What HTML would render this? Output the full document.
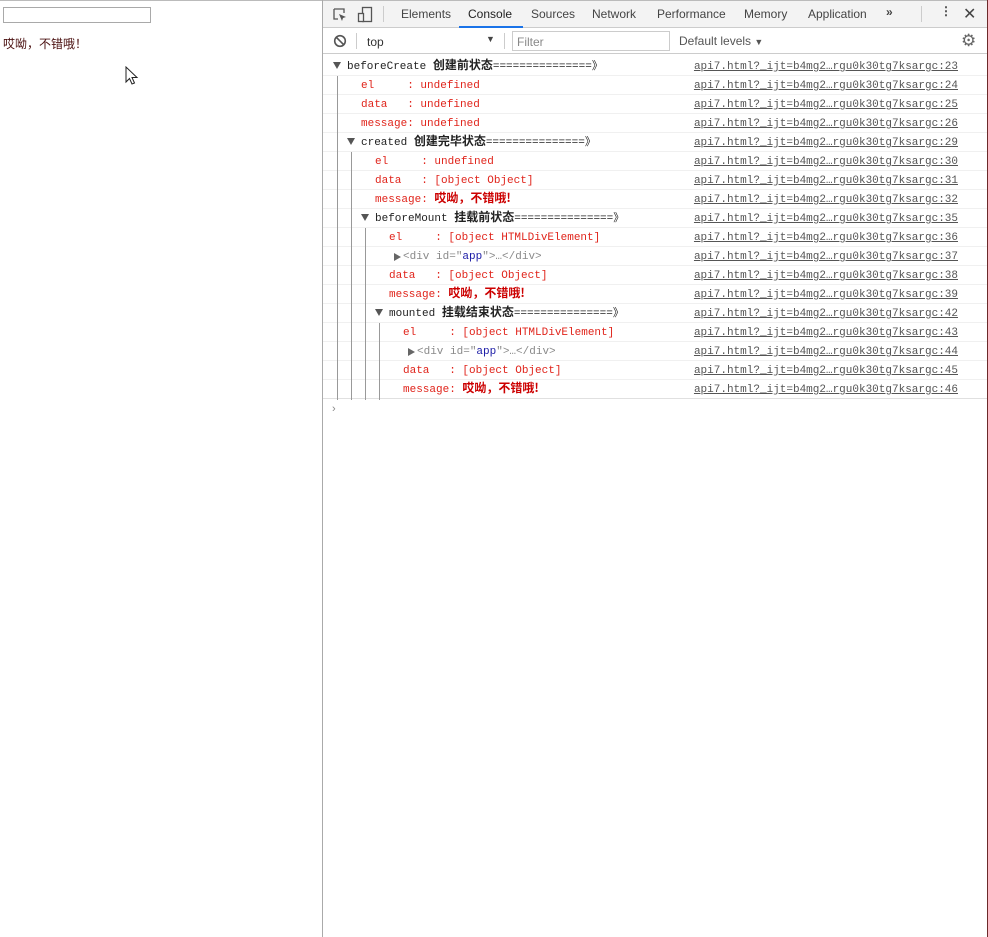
<!DOCTYPE html>
<html><head><meta charset="utf-8"><style>
*{margin:0;padding:0;box-sizing:border-box}
body{width:988px;height:937px;position:relative;background:#fff;overflow:hidden;font-family:"Liberation Sans","Noto Sans CJK SC",sans-serif}
.a{position:absolute}
.mono{font-family:"Liberation Mono","Noto Sans CJK SC",monospace;font-size:11px;white-space:pre}
.row{position:absolute;left:323px;right:1px;height:19px;border-bottom:1px solid #f0f0f0}
.t{position:absolute;top:4px;height:13px;line-height:13px;white-space:pre;display:flex;align-items:center}
.t span,.t b{display:block;line-height:13px;height:13px;white-space:pre}
.lnk{position:absolute;top:4px;line-height:13px;right:29px;color:#555;text-decoration:underline;white-space:pre}
.red{color:#e0241b}
.t .cn{color:#c00;font-weight:bold;font-family:"Noto Sans CJK SC",sans-serif;font-size:12px;line-height:13px;height:13px;position:relative;top:-3px}
.hd{color:#222}
.hd b{font-family:"Noto Sans CJK SC",sans-serif;font-size:12px;position:relative;top:-3px}
.tri{position:absolute;top:5px;width:0;height:0;border-left:4px solid transparent;border-right:4px solid transparent;border-top:7px solid #555}
.tr2{position:absolute;top:6px;width:0;height:0;border-top:4px solid transparent;border-bottom:4px solid transparent;border-left:7px solid #666}
.vl{position:absolute;width:1px;background:#999}
.tab{position:absolute;top:7px;font-size:12px;color:#444}
.tag{color:#8a8a8a}.val{color:#1a1aa6}.nm{color:#8a8a8a}
</style></head><body>
<div class="a" style="left:0;top:0;width:988px;height:1px;background:#bbb"></div>
<div class="a" style="left:3px;top:7px;width:148px;height:16px;border:1px solid #a9a9a9"></div>
<div class="a" style="left:3px;top:35px;font-size:12px;color:#4a1010;font-family:'Noto Sans CJK SC',sans-serif">哎呦，不错哦！</div>
<svg class="a" style="left:125px;top:66px" width="14" height="20" viewBox="0 0 14 20"><path d="M1 1 L1 16 L4.5 12.5 L7 18 L9.5 17 L7 11.5 L12 11.5 Z" fill="#fff" stroke="#222" stroke-width="1"/></svg>
<div class="a" style="left:322px;top:0;width:1px;height:937px;background:#aaa"></div>
<div class="a" style="left:987px;top:0;width:1px;height:937px;background:#6b2a2a"></div>
<div class="a" style="left:323px;top:1px;width:664px;height:27px;background:#f3f3f3;border-bottom:1px solid #ccc"></div>
<svg class="a" style="left:332px;top:7px" width="16" height="16" viewBox="0 0 16 16"><path d="M2 2h10v4M2 2v10h4" fill="none" stroke="#555" stroke-width="1.3"/><path d="M7 7l7 3-3 1-1 3z" fill="#555"/></svg>
<svg class="a" style="left:357px;top:6px" width="16" height="17" viewBox="0 0 16 17"><rect x="5.5" y="1.5" width="9" height="14" fill="none" stroke="#555" stroke-width="1.3"/><rect x="1.5" y="7.5" width="5" height="8" fill="#f3f3f3" stroke="#555" stroke-width="1.3"/></svg>
<div class="a" style="left:383px;top:6px;width:1px;height:16px;background:#ccc"></div>
<div class="tab" style="left:401px">Elements</div>
<div class="tab" style="left:468px;color:#222">Console</div>
<div class="a" style="left:459px;top:26px;width:64px;height:2px;background:#1a73e8"></div>
<div class="tab" style="left:531px">Sources</div>
<div class="tab" style="left:592px">Network</div>
<div class="tab" style="left:657px">Performance</div>
<div class="tab" style="left:744px">Memory</div>
<div class="tab" style="left:808px">Application</div>
<div class="tab" style="left:886px;font-weight:bold;top:5px">»</div>
<div class="a" style="left:921px;top:6px;width:1px;height:16px;background:#ccc"></div>
<div class="tab" style="left:940px;font-weight:bold;top:4px">⋮</div>
<div class="tab" style="left:963px;font-size:16px;top:4px">✕</div>
<div class="a" style="left:323px;top:29px;width:664px;height:25px;background:#fff;border-bottom:1px solid #ccc"></div>
<svg class="a" style="left:333px;top:34px" width="14" height="14" viewBox="0 0 14 14"><circle cx="7" cy="7" r="5.3" fill="none" stroke="#555" stroke-width="1.6"/><path d="M3.2 3.2l7.6 7.6" stroke="#555" stroke-width="1.6"/></svg>
<div class="a" style="left:356px;top:33px;width:1px;height:16px;background:#ccc"></div>
<div class="a" style="left:367px;top:35px;font-size:12px;color:#333">top</div>
<div class="a" style="left:486px;top:34px;font-size:9px;color:#444">▼</div>
<div class="a" style="left:504px;top:33px;width:1px;height:16px;background:#ccc"></div>
<div class="a" style="left:512px;top:31px;width:158px;height:20px;border:1px solid #ccc"></div>
<div class="a" style="left:517px;top:35px;font-size:12px;color:#888">Filter</div>
<div class="a" style="left:679px;top:34px;font-size:12px;color:#555">Default levels <span style="font-size:9px">▼</span></div>
<div class="a" style="left:961px;top:31px;font-size:17px;color:#666">⚙</div>
<div class="mono">
<div class="row" style="top:57px"><div class="tri" style="left:10px"></div><div class="t hd" style="left:24px"><span>beforeCreate </span><b>创建前状态</b><span>===============》</span></div><span class="lnk">api7.html?_ijt=b4mg2…rgu0k30tg7ksargc:23</span></div>
<div class="row" style="top:76px"><div class="t red" style="left:38px"><span>el     : undefined</span></div><span class="lnk">api7.html?_ijt=b4mg2…rgu0k30tg7ksargc:24</span></div>
<div class="row" style="top:95px"><div class="t red" style="left:38px"><span>data   : undefined</span></div><span class="lnk">api7.html?_ijt=b4mg2…rgu0k30tg7ksargc:25</span></div>
<div class="row" style="top:114px"><div class="t red" style="left:38px"><span>message: undefined</span></div><span class="lnk">api7.html?_ijt=b4mg2…rgu0k30tg7ksargc:26</span></div>
<div class="row" style="top:133px"><div class="tri" style="left:24px"></div><div class="t hd" style="left:38px"><span>created </span><b>创建完毕状态</b><span>===============》</span></div><span class="lnk">api7.html?_ijt=b4mg2…rgu0k30tg7ksargc:29</span></div>
<div class="row" style="top:152px"><div class="t red" style="left:52px"><span>el     : undefined</span></div><span class="lnk">api7.html?_ijt=b4mg2…rgu0k30tg7ksargc:30</span></div>
<div class="row" style="top:171px"><div class="t red" style="left:52px"><span>data   : [object Object]</span></div><span class="lnk">api7.html?_ijt=b4mg2…rgu0k30tg7ksargc:31</span></div>
<div class="row" style="top:190px"><div class="t red" style="left:52px"><span>message: </span><span class="cn">哎呦，不错哦!</span></div><span class="lnk">api7.html?_ijt=b4mg2…rgu0k30tg7ksargc:32</span></div>
<div class="row" style="top:209px"><div class="tri" style="left:38px"></div><div class="t hd" style="left:52px"><span>beforeMount </span><b>挂载前状态</b><span>===============》</span></div><span class="lnk">api7.html?_ijt=b4mg2…rgu0k30tg7ksargc:35</span></div>
<div class="row" style="top:228px"><div class="t red" style="left:66px"><span>el     : [object HTMLDivElement]</span></div><span class="lnk">api7.html?_ijt=b4mg2…rgu0k30tg7ksargc:36</span></div>
<div class="row" style="top:247px"><div class="tr2" style="left:71px"></div><div class="t" style="left:80px"><span class="tag">&lt;div </span><span class="nm">id</span><span class="tag">="</span><span class="val">app</span><span class="tag">"&gt;…&lt;/div&gt;</span></div><span class="lnk">api7.html?_ijt=b4mg2…rgu0k30tg7ksargc:37</span></div>
<div class="row" style="top:266px"><div class="t red" style="left:66px"><span>data   : [object Object]</span></div><span class="lnk">api7.html?_ijt=b4mg2…rgu0k30tg7ksargc:38</span></div>
<div class="row" style="top:285px"><div class="t red" style="left:66px"><span>message: </span><span class="cn">哎呦，不错哦!</span></div><span class="lnk">api7.html?_ijt=b4mg2…rgu0k30tg7ksargc:39</span></div>
<div class="row" style="top:304px"><div class="tri" style="left:52px"></div><div class="t hd" style="left:66px"><span>mounted </span><b>挂载结束状态</b><span>===============》</span></div><span class="lnk">api7.html?_ijt=b4mg2…rgu0k30tg7ksargc:42</span></div>
<div class="row" style="top:323px"><div class="t red" style="left:80px"><span>el     : [object HTMLDivElement]</span></div><span class="lnk">api7.html?_ijt=b4mg2…rgu0k30tg7ksargc:43</span></div>
<div class="row" style="top:342px"><div class="tr2" style="left:85px"></div><div class="t" style="left:94px"><span class="tag">&lt;div </span><span class="nm">id</span><span class="tag">="</span><span class="val">app</span><span class="tag">"&gt;…&lt;/div&gt;</span></div><span class="lnk">api7.html?_ijt=b4mg2…rgu0k30tg7ksargc:44</span></div>
<div class="row" style="top:361px"><div class="t red" style="left:80px"><span>data   : [object Object]</span></div><span class="lnk">api7.html?_ijt=b4mg2…rgu0k30tg7ksargc:45</span></div>
<div class="row" style="top:380px;border-bottom-color:#e0e0e0"><div class="t red" style="left:80px"><span>message: </span><span class="cn">哎呦，不错哦!</span></div><span class="lnk">api7.html?_ijt=b4mg2…rgu0k30tg7ksargc:46</span></div>
</div>
<div class="vl" style="left:337px;top:76px;height:324px"></div>
<div class="vl" style="left:351px;top:152px;height:248px"></div>
<div class="vl" style="left:365px;top:228px;height:172px"></div>
<div class="vl" style="left:379px;top:323px;height:77px"></div>
<div class="a" style="left:332px;top:403px;font-size:11px;color:#888">›</div>
</body></html>
